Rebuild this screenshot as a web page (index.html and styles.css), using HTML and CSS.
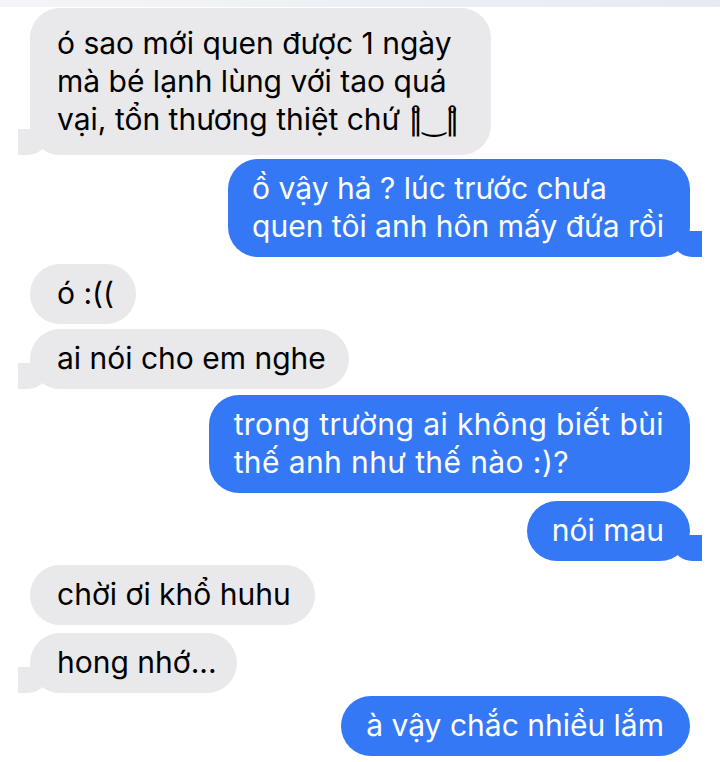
FILE: index.html
```html
<!DOCTYPE html>
<html lang="vi">
<head>
  <meta charset="UTF-8">
  <title>Tin nhắn</title>
  <link rel="stylesheet" href="styles.css">
</head>
<body>

<div class="topbar"></div>

<div class="thread">
  <div class="msg them tail m1">ó sao mới quen được 1 ngày<br>mà bé lạnh lùng với tao quá<br>vại, tổn thương thiệt chứ <span class="kao">‖̊‿‖̊</span></div>
  <div class="msg me tail m2">ồ vậy hả ? lúc trước chưa<br>quen tôi anh hôn mấy đứa rồi</div>
  <div class="msg them m3">ó :((</div>
  <div class="msg them tail m4">ai nói cho em nghe</div>
  <div class="msg me m5">trong trường ai không biết bùi<br>thế anh như thế nào :)?</div>
  <div class="msg me tail m6">nói mau</div>
  <div class="msg them m7">chời ơi khổ huhu</div>
  <div class="msg them tail m8">hong nhớ...</div>
  <div class="msg me m9">à vậy chắc nhiều lắm</div>
</div>

</body>
</html>
```

FILE: styles.css
```css
body {
  margin: 0;
  background: #fff;
  font-family: Inter, "Noto Sans", sans-serif;
  overflow: hidden;
}
.topbar {
  height: 7px;
  background: linear-gradient(to right, #f3f5f8, #e6ebf3);
}
.thread {
  display: flex;
  flex-direction: column;
  padding: 1px 30px 0 30px;
}
.msg {
  position: relative;
  width: fit-content;
  font-size: 30px;
  line-height: 38px;
  padding: 10px 26px 12px 27px;
  border-radius: 30px;
}
.them {
  background: #e9e9eb;
  color: #000;
  align-self: flex-start;
}
.me {
  background: #3478f6;
  color: #fff;
  align-self: flex-end;
  padding-left: 25px;
}
.kao {
  font-family: "DejaVu Sans", sans-serif;
  font-size: 28px;
  letter-spacing: 0;
}

/* bubble tails */
.tail::before, .tail::after {
  content: "";
  position: absolute;
  bottom: 0;
  height: 26px;
}
.them.tail::before {
  left: -12px;
  width: 28px;
  background: #e9e9eb;
  border-bottom-right-radius: 18px 15px;
}
.them.tail::after {
  left: -30px;
  width: 18px;
  background: #fff;
  border-bottom-right-radius: 12px;
}
.me.tail::before {
  right: -12px;
  width: 28px;
  background: #3478f6;
  border-bottom-left-radius: 18px 15px;
}
.me.tail::after {
  right: -30px;
  width: 18px;
  background: #fff;
  border-bottom-left-radius: 12px;
}

.m1 { padding-top: 16px; padding-bottom: 15px; padding-right: 32px; }
.m2 { margin-top: 4px; padding-left: 24px; }
.m3 { margin-top: 7px; padding-right: 22px; }
.m4 { margin-top: 5px; padding-right: 23px; }
.m5 { margin-top: 6px; letter-spacing: 0.4px; }
.m6 { margin-top: 8px; }
.m7 { margin-top: 4px; padding-right: 24px; }
.m8 { margin-top: 8px; padding-right: 20px; }
.m9 { margin-top: 3px; }
```
